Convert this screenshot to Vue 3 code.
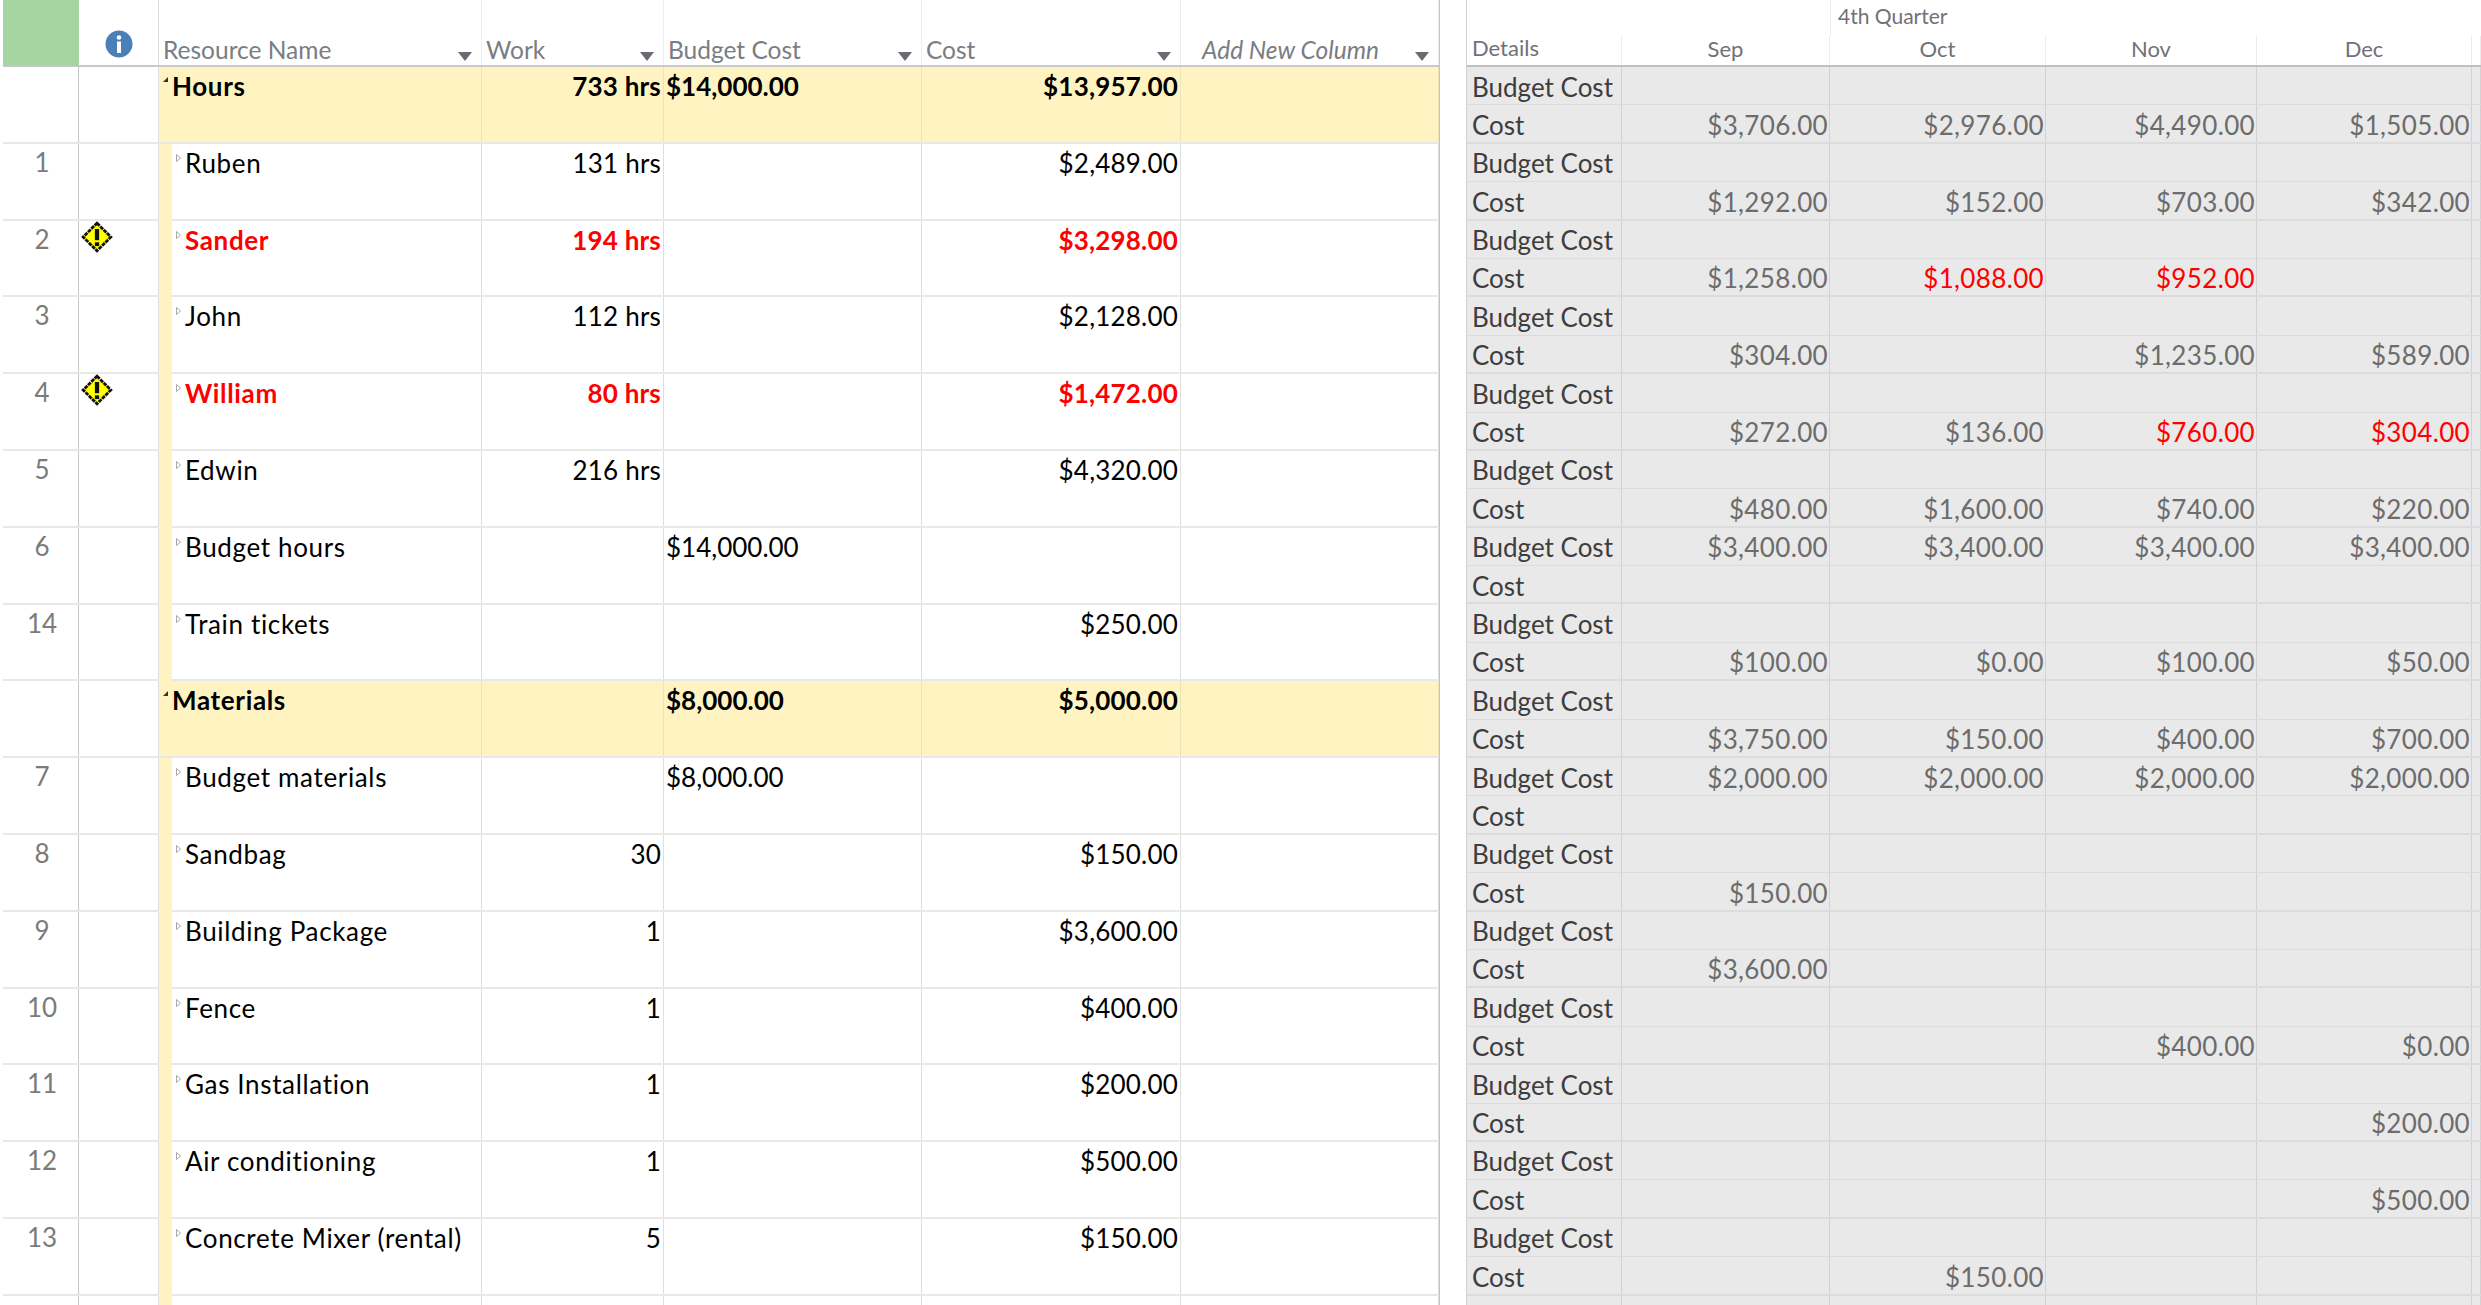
<template>
  <div class="view">
    <section class="sheet">
      <div class="row head">
        <div class="cell corner"></div>
        <div class="cell ind">
          <svg class="info" viewBox="0 0 28 28" width="28" height="28">
            <circle cx="14" cy="14" r="13.5" fill="#4a7fb8"/>
            <circle cx="14" cy="7.5" r="2.3" fill="#fff"/>
            <rect x="12" y="11.5" width="4" height="11.5" fill="#fff"/>
          </svg>
        </div>
        <div v-for="h in headers" :key="h.label" class="cell hcell" :class="{ italic: h.italic }" :style="{ paddingLeft: h.pad + 'px' }">
          <span>{{ h.label }}</span>
          <i class="drop"></i>
        </div>
      </div>
      <div v-for="(r, i) in rows" :key="i" class="row" :class="{ group: r.group, late: r.late }">
        <div class="cell num">{{ r.id }}</div>
        <div class="cell ind">
          <svg v-if="r.late" class="warn" viewBox="0 0 30 30" width="32" height="32">
            <path d="M15 2 28 15 15 28 2 15Z" fill="#ffff00" stroke="#111" stroke-width="2.6" stroke-dasharray="3.6 .8"/>
            <rect x="13" y="7.5" width="4" height="10.5" fill="#111"/>
            <rect x="13" y="20" width="4" height="3.5" fill="#111"/>
          </svg>
        </div>
        <div class="cell name">
          <template v-if="r.name">
            <i v-if="!r.group" class="strip"></i>
            <span class="twisty">
              <svg v-if="r.group" viewBox="0 0 14 14" width="14" height="14"><path d="M9 3V8H4Z" fill="#333"/></svg>
              <svg v-else viewBox="0 0 14 14" width="14" height="14"><path d="M4.5 3.5 8.5 7 4.5 10.5Z" fill="#fff" stroke="#a8a8a8"/></svg>
            </span>
            <span class="title">{{ r.name }}</span>
          </template>
          <i v-else class="strip none"></i>
        </div>
        <div class="cell right">{{ r.work }}</div>
        <div class="cell money">{{ r.budget }}</div>
        <div class="cell right">{{ r.cost }}</div>
        <div class="cell"></div>
      </div>
    </section>

    <section class="usage">
      <div class="quarter">
        <div class="qblank"></div>
        <div class="qlabel">4th Quarter</div>
      </div>
      <div class="urow uhead">
        <div class="ucell details">Details</div>
        <div v-for="m in months" :key="m" class="ucell month">{{ m }}</div>
        <div class="ucell"></div>
      </div>
      <template v-for="(r, i) in rows" :key="i">
        <div class="urow">
          <div class="ucell label">Budget Cost</div>
          <div v-for="(v, j) in r.planned" :key="j" class="ucell val">{{ fmt(v) }}</div>
          <div class="ucell"></div>
        </div>
        <div class="urow end">
          <div class="ucell label">Cost</div>
          <div v-for="(v, j) in r.actual" :key="j" class="ucell val" :class="{ over: r.over && r.over.includes(j) }">{{ fmt(v) }}</div>
          <div class="ucell"></div>
        </div>
      </template>
    </section>
  </div>
</template>

<script setup>
const headers = [
  { label: 'Resource Name', pad: 4 },
  { label: 'Work', pad: 4 },
  { label: 'Budget Cost', pad: 4 },
  { label: 'Cost', pad: 4 },
  { label: 'Add New Column', pad: 21, italic: true },
]
const months = ['Sep', 'Oct', 'Nov', 'Dec']
const none = [null, null, null, null]

const rows = [
  { id: '', name: 'Hours', group: true, work: '733 hrs', budget: '$14,000.00', cost: '$13,957.00', planned: none, actual: [3706, 2976, 4490, 1505] },
  { id: 1, name: 'Ruben', work: '131 hrs', cost: '$2,489.00', planned: none, actual: [1292, 152, 703, 342] },
  { id: 2, name: 'Sander', late: true, work: '194 hrs', cost: '$3,298.00', planned: none, actual: [1258, 1088, 952, null], over: [1, 2] },
  { id: 3, name: 'John', work: '112 hrs', cost: '$2,128.00', planned: none, actual: [304, null, 1235, 589] },
  { id: 4, name: 'William', late: true, work: '80 hrs', cost: '$1,472.00', planned: none, actual: [272, 136, 760, 304], over: [2, 3] },
  { id: 5, name: 'Edwin', work: '216 hrs', cost: '$4,320.00', planned: none, actual: [480, 1600, 740, 220] },
  { id: 6, name: 'Budget hours', budget: '$14,000.00', planned: [3400, 3400, 3400, 3400], actual: none },
  { id: 14, name: 'Train tickets', cost: '$250.00', planned: none, actual: [100, 0, 100, 50] },
  { id: '', name: 'Materials', group: true, budget: '$8,000.00', cost: '$5,000.00', planned: none, actual: [3750, 150, 400, 700] },
  { id: 7, name: 'Budget materials', budget: '$8,000.00', planned: [2000, 2000, 2000, 2000], actual: none },
  { id: 8, name: 'Sandbag', work: '30', cost: '$150.00', planned: none, actual: [150, null, null, null] },
  { id: 9, name: 'Building Package', work: '1', cost: '$3,600.00', planned: none, actual: [3600, null, null, null] },
  { id: 10, name: 'Fence', work: '1', cost: '$400.00', planned: none, actual: [null, null, 400, 0] },
  { id: 11, name: 'Gas Installation', work: '1', cost: '$200.00', planned: none, actual: [null, null, null, 200] },
  { id: 12, name: 'Air conditioning', work: '1', cost: '$500.00', planned: none, actual: [null, null, null, 500] },
  { id: 13, name: 'Concrete Mixer (rental)', work: '5', cost: '$150.00', planned: none, actual: [null, 150, null, null] },
  { id: '', name: '', planned: none, actual: none },
]

const fmt = (v) => (v === null ? '' : '$' + v.toLocaleString('en-US', { minimumFractionDigits: 2 }))
</script>

<style scoped>
.view {
  width: 2481px; height: 1305px; overflow: hidden; display: flex; background: #fff;
  font-family: Lato, "Open Sans", sans-serif; font-size: 26px; color: #000;
}

.sheet { width: 1440px; flex-shrink: 0; height: 1305px; overflow: hidden; padding-left: 3px; box-sizing: border-box; border-right: 1px solid #c4c4c4; }
.row {
  display: grid; grid-template-columns: 76px 80px 323px 182px 258px 259px 258px;
  height: 76.8px; box-sizing: border-box; border-bottom: 2px solid #e8e8e8;
}
.row.head { height: 67px; border-bottom: 2px solid #c8c8c8; }
.cell {
  border-right: 1px solid #dedede; padding: 3px 2px 0 3px; line-height: 32px; box-sizing: border-box;
  white-space: nowrap; min-width: 0;
}
.right { text-align: right; letter-spacing: .2px; }
.money { padding-left: 2px; }
.num { text-align: center; color: #7b7b7b; padding: 2px 0 0 3px; border-right-color: #c8c8c8; letter-spacing: 0; }
.ind { position: relative; padding: 0; border-right-color: #dedede; }
.corner { background: #a5d5a0; padding: 0; border: none; margin-bottom: -1px; }

.info { position: absolute; left: 26px; top: 30px; }
.warn { position: absolute; left: 2px; top: 0; }

.hcell {
  display: flex; align-items: flex-end; justify-content: space-between; color: #7a7d83;
  font-size: 24.5px; line-height: 30px; padding-right: 8px; padding-top: 0; padding-bottom: 0; border-right-color: #eeeeee;
}
.hcell.italic { font-style: italic; }
.drop {
  width: 0; height: 0; margin-bottom: 4px; margin-right: 1px;
  border-left: 7px solid transparent; border-right: 7px solid transparent; border-top: 9px solid #696c72;
}

.name { display: flex; padding: 0; }
.title { padding-top: 3px; letter-spacing: .65px; }
.strip { width: 13px; align-self: stretch; background: #fff4c1; margin-bottom: -2px; flex-shrink: 0; }
.twisty { width: 13px; padding-top: 7px; flex-shrink: 0; line-height: 0; }

.group { font-weight: 700; }
.group .cell:nth-child(n+3) { background: #fff4c1; border-right-color: #ece3b8; }
.late { color: #ff0000; font-weight: 700; }
.late .num { color: #7b7b7b; font-weight: 400; }

.usage { margin-left: 26px; flex: 1; height: 1305px; overflow: hidden; border-left: 1px solid #d0d0d0; }
.quarter { display: flex; height: 36px; }
.qblank { width: 363px; flex-shrink: 0; border-right: 1px solid #ececec; }
.qlabel { padding-left: 7px; font-size: 21px; line-height: 32px; color: #6f7278; }
.urow {
  display: grid; grid-template-columns: 155px 208px 216px 211px 215px 1fr;
  height: 38.4px; box-sizing: border-box; background: #e9e9e9; border-bottom: 1px solid #dcdcdc;
}
.urow.end { border-bottom-width: 2px; }
.urow.uhead { height: 31px; background: #fff; border-bottom: 2px solid #c0c0c0; }
.ucell {
  border-right: 1px solid #d2d2d2; padding: 3.5px 1px 0 5px; line-height: 32px; box-sizing: border-box;
  white-space: nowrap; min-width: 0;
}
.uhead .ucell { padding-top: 0; line-height: 24px; font-size: 22px; color: #6f7278; border-right-color: #ececec; }
.uhead .month { text-align: center; padding: 1px 3px 0 3px; }
.label { color: #3d3d3d; }
.val { text-align: right; color: #6c6c6c; letter-spacing: .35px; }
.val.over { color: #ff0000; }
</style>

<style>
html, body { margin: 0; overflow: hidden; }
</style>
